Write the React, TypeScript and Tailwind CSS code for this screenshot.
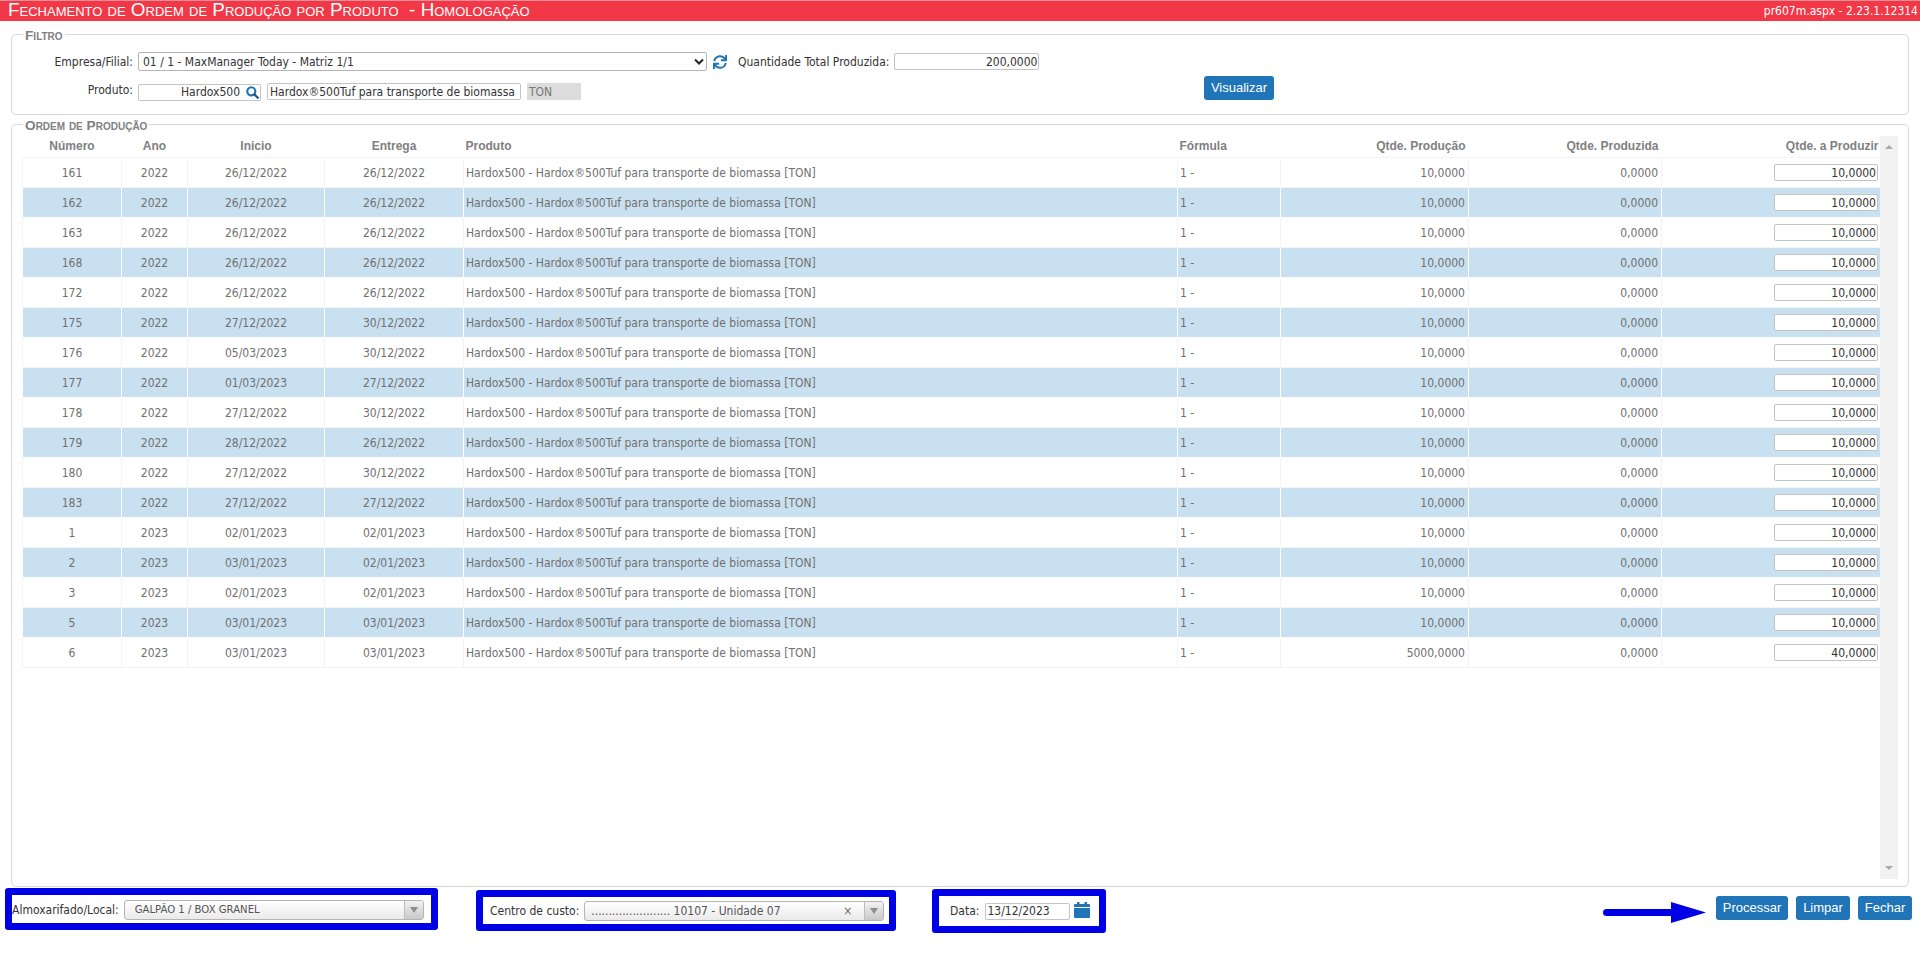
import { FaSync } from 'react-icons/fa'

const rows = [
  ['161', '2022', '26/12/2022', '26/12/2022', '10,0000', '10,0000'],
  ['162', '2022', '26/12/2022', '26/12/2022', '10,0000', '10,0000'],
  ['163', '2022', '26/12/2022', '26/12/2022', '10,0000', '10,0000'],
  ['168', '2022', '26/12/2022', '26/12/2022', '10,0000', '10,0000'],
  ['172', '2022', '26/12/2022', '26/12/2022', '10,0000', '10,0000'],
  ['175', '2022', '27/12/2022', '30/12/2022', '10,0000', '10,0000'],
  ['176', '2022', '05/03/2023', '30/12/2022', '10,0000', '10,0000'],
  ['177', '2022', '01/03/2023', '27/12/2022', '10,0000', '10,0000'],
  ['178', '2022', '27/12/2022', '30/12/2022', '10,0000', '10,0000'],
  ['179', '2022', '28/12/2022', '26/12/2022', '10,0000', '10,0000'],
  ['180', '2022', '27/12/2022', '30/12/2022', '10,0000', '10,0000'],
  ['183', '2022', '27/12/2022', '27/12/2022', '10,0000', '10,0000'],
  ['1', '2023', '02/01/2023', '02/01/2023', '10,0000', '10,0000'],
  ['2', '2023', '03/01/2023', '02/01/2023', '10,0000', '10,0000'],
  ['3', '2023', '02/01/2023', '02/01/2023', '10,0000', '10,0000'],
  ['5', '2023', '03/01/2023', '03/01/2023', '10,0000', '10,0000'],
  ['6', '2023', '03/01/2023', '03/01/2023', '5000,0000', '40,0000'],
]

const produto = 'Hardox500 - Hardox®500Tuf para transporte de biomassa [TON]'
const inputCls = 'h-[17px] border border-[#c4c4c4] bg-white px-[1px] text-[#333] outline-none rounded-[2px]'
const legendCls = "px-[2px] pt-[4px] font-['Liberation_Sans',sans-serif] text-[13.7px] leading-[14px] font-bold text-[#808080] [font-variant:small-caps]"
const btnCls = "h-[24px] rounded-[3px] bg-[#1f75b7] font-['Liberation_Sans',sans-serif] text-[13px] text-white"

function SearchIcon() {
  return (
    <svg width="13" height="13" viewBox="0 0 16 16" className="absolute right-[2px] top-[3px]">
      <circle cx="6.5" cy="6.5" r="5" fill="none" stroke="#1f75b7" strokeWidth="2.6" />
      <path d="M10.5 10.5l4 4" stroke="#24506f" strokeWidth="2.8" strokeLinecap="round" />
    </svg>
  )
}

function CalendarIcon() {
  return (
    <svg width="16" height="16" viewBox="0 0 16 16" className="ml-[4px] mb-[3px]">
      <rect x="0" y="2" width="16" height="14" rx="1" fill="#1f75b7" />
      <rect x="3" y="0" width="2.5" height="4" fill="#1f75b7" />
      <rect x="10.5" y="0" width="2.5" height="4" fill="#1f75b7" />
      <rect x="0" y="5" width="16" height="1" fill="#ffffff" />
    </svg>
  )
}

function ComboArrow() {
  return (
    <span className="flex h-full w-[19px] items-center justify-center border-l border-[#bdbdbd] bg-gradient-to-b from-[#f2f2f2] to-[#c9c9c9]">
      <span className="h-0 w-0 border-x-[4px] border-t-[6px] border-x-transparent border-t-[#8e8e8e]" />
    </span>
  )
}

export default function App() {
  return (
    <div className="flex h-[953px] w-[1920px] flex-col overflow-hidden bg-white font-['DejaVu_Sans_Condensed','DejaVu_Sans',sans-serif] text-[12px] text-[#333]">
      <div className="flex h-[21px] shrink-0 items-center justify-between border-t border-[#e9909a] bg-[#f23847] pl-[8px] pr-[2px] text-white">
        <span className="pb-[1px] font-['Liberation_Sans',sans-serif] text-[18.85px] leading-none [font-variant:small-caps] whitespace-pre">Fechamento de Ordem de Produção por Produto  - Homologação</span>
        <span className="text-[12px]">pr607m.aspx - 2.23.1.12314</span>
      </div>

      <fieldset className="mx-[11px] mt-[4px] h-[90px] shrink-0 rounded-[5px] border border-[#d6d6d6] pt-[9px] pl-[11px]">
        <legend className={legendCls}>Filtro</legend>
        <div className="flex flex-col gap-[5px] pl-[115px]">
          <div className="flex h-[19px] items-center">
            <span className="mr-[5px] -ml-[100px] w-[95px] text-right">Empresa/Filial:</span>
            <div className="flex h-[19px] w-[569px] items-center justify-between rounded-[2px] border border-[#b5b5b5] bg-white pl-[4px] pr-[2px]">
              <span>01 / 1 - MaxManager Today - Matriz 1/1</span>
              <svg width="10" height="8" viewBox="0 0 10 8"><path d="M1 1.5l4 4 4-4" fill="none" stroke="#222" strokeWidth="2" /></svg>
            </div>
            <FaSync className="ml-[6px] text-[14px] text-[#1f75b7]" />
            <span className="ml-[11px]">Quantidade Total Produzida:</span>
            <input readOnly value="200,0000" className={`${inputCls} ml-[5px] w-[145px] text-right`} />
          </div>
          <div className="flex h-[24px] items-end">
            <span className="mr-[5px] -ml-[100px] w-[95px] pb-[1px] text-right">Produto:</span>
            <div className="relative h-[17px] w-[123px]">
              <input readOnly value="Hardox500" className={`${inputCls} w-full pr-[20px] text-right`} />
              <SearchIcon />
            </div>
            <input readOnly value="Hardox®500Tuf para transporte de biomassa" className={`${inputCls} ml-[6px] w-[254px] px-[2px]`} />
            <span className="ml-[6px] flex h-[17px] w-[54px] items-center bg-[#dcdcdc] pl-[2px] text-[#777]">TON</span>
            <button className={`${btnCls} ml-[623px] w-[70px]`}>Visualizar</button>
          </div>
        </div>
      </fieldset>

      <fieldset className="mx-[11px] flex min-h-0 flex-1 rounded-[5px] border border-[#d6d6d6] pt-[3px] pl-[10px] pr-[10px] pb-[7px]">
        <legend className={`${legendCls} ml-[1px]`}>Ordem de Produção</legend>
        <div className="flex h-full">
          <div className="w-[1858px]">
            <table className="w-[1858px] table-fixed border-collapse">
              <colgroup>
                <col className="w-[99px]" />
                <col className="w-[66px]" />
                <col className="w-[137px]" />
                <col className="w-[139px]" />
                <col className="w-[714px]" />
                <col className="w-[103px]" />
                <col className="w-[188px]" />
                <col className="w-[193px]" />
                <col className="w-[219px]" />
              </colgroup>
              <thead>
                <tr className="h-[21px] font-['Liberation_Sans',sans-serif] text-[12px] font-bold text-[#808080]">
                  <th className="font-bold">Número</th>
                  <th className="font-bold">Ano</th>
                  <th className="font-bold">Inicio</th>
                  <th className="font-bold">Entrega</th>
                  <th className="pl-[2px] text-left font-bold">Produto</th>
                  <th className="pl-[2px] text-left font-bold">Fórmula</th>
                  <th className="pr-[3px] text-right font-bold">Qtde. Produção</th>
                  <th className="pr-[3px] text-right font-bold">Qtde. Produzida</th>
                  <th className="pr-[2px] text-right font-bold">Qtde. a Produzir</th>
                </tr>
              </thead>
              <tbody className="text-[#707070]">
                {rows.map((r, i) => {
                  const cell = i % 2 ? 'border border-white' : 'border border-[#f4f4f4]'
                  return (
                    <tr key={r[0]} className={`h-[30px] ${i % 2 ? 'bg-[#c9e0f1]' : 'bg-white'}`}>
                      <td className={`${cell} pt-[2px] text-center`}>{r[0]}</td>
                      <td className={`${cell} pt-[2px] text-center`}>{r[1]}</td>
                      <td className={`${cell} pt-[2px] text-center`}>{r[2]}</td>
                      <td className={`${cell} pt-[2px] text-center`}>{r[3]}</td>
                      <td className={`${cell} pt-[2px] pl-[2px]`}>{produto}</td>
                      <td className={`${cell} pt-[2px] pl-[2px]`}>1 -</td>
                      <td className={`${cell} pt-[2px] pr-[3px] text-right`}>{r[4]}</td>
                      <td className={`${cell} pt-[2px] pr-[3px] text-right`}>0,0000</td>
                      <td className={`${cell} pt-[1px] pr-[2px] text-right`}>
                        <input readOnly value={r[5]} className={`${inputCls} ml-auto block w-[104px] text-right`} />
                      </td>
                    </tr>
                  )
                })}
              </tbody>
            </table>
          </div>
          <div className="flex w-[18px] flex-col items-center justify-between bg-[#f1f1f1] py-[9px]">
            <span className="h-0 w-0 border-x-[4px] border-b-[4px] border-x-transparent border-b-[#a8a8a8]" />
            <span className="h-0 w-0 border-x-[4px] border-t-[4px] border-x-transparent border-t-[#a8a8a8]" />
          </div>
        </div>
      </fieldset>

      <div className="flex h-[66px] shrink-0 items-start pl-[5px] pt-[1px]">
        <div className="flex h-[42px] w-[433px] items-center rounded-[3px] border-[7px] border-[#0000e6] bg-white pt-[2px]">
          <span>Almoxarifado/Local:</span>
          <div className="ml-[5px] flex h-[20px] w-[300px] items-center justify-between overflow-hidden rounded-[3px] border border-[#b5b5b5] bg-gradient-to-b from-white to-[#eaeaea] pl-[10px]">
            <span className="font-['DejaVu_Sans',sans-serif] text-[10.1px] text-[#555]">GALPÃO 1 / BOX GRANEL</span>
            <ComboArrow />
          </div>
        </div>

        <div className="ml-[38px] mt-[2px] flex h-[41px] w-[420px] items-center rounded-[3px] border-[7px] border-[#0000e6] bg-white pl-[7px]">
          <span>Centro de custo:</span>
          <div className="ml-[5px] flex h-[20px] w-[300px] items-center overflow-hidden rounded-[3px] border border-[#b5b5b5] bg-gradient-to-b from-white to-[#eaeaea] pl-[6px]">
            <span className="flex-1 text-[#555]">....................... 10107 - Unidade 07</span>
            <span className="mr-[12px] text-[#666]">×</span>
            <ComboArrow />
          </div>
        </div>

        <div className="ml-[36px] mt-[1px] flex h-[44px] w-[174px] items-center rounded-[3px] border-[7px] border-[#0000e6] bg-white pl-[11px]">
          <span>Data:</span>
          <input readOnly value="13/12/2023" className={`${inputCls} ml-[6px] w-[85px]`} />
          <CalendarIcon />
        </div>

        <svg width="103" height="21" viewBox="0 0 103 21" className="ml-[497px] mt-[14px]">
          <path d="M3.5 10.5H68" stroke="#0000e6" strokeWidth="7" strokeLinecap="round" />
          <path d="M68 0l35 10.5L68 21z" fill="#0000e6" />
        </svg>

        <div className="ml-[10px] mt-[8px] flex gap-[8px]">
          <button className={`${btnCls} w-[72px]`}>Processar</button>
          <button className={`${btnCls} w-[54px]`}>Limpar</button>
          <button className={`${btnCls} w-[54px]`}>Fechar</button>
        </div>
      </div>
    </div>
  )
}
